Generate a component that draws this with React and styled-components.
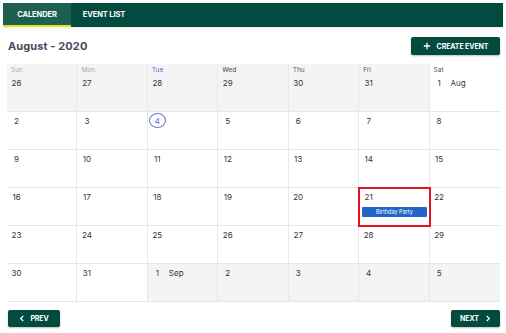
import React from "react";
import styled, { createGlobalStyle } from "styled-components";

const Global = createGlobalStyle`
  html, body { margin: 0; padding: 0; background: #fff; }
  body { font-family: Inter, "Noto Sans", sans-serif; }
  * { box-sizing: border-box; }
`;

const Page = styled.div`
  width: 506px;
  height: 333px;
  padding: 3px 3px 0 3px;
  background: #fff;
`;

const TopBar = styled.div`
  display: flex;
  height: 24px;
  background: #024b3e;
  box-shadow: 0 1px 2px rgba(0, 0, 0, 0.08);
`;

const Tab = styled.div`
  display: flex;
  align-items: center;
  justify-content: center;
  width: ${(p) => p.$w}px;
  height: 100%;
  padding-top: 1px;
  background: ${(p) => (p.$active ? "#1d5f50" : "transparent")};
  border-bottom: 2px solid ${(p) => (p.$active ? "#e4e21a" : "transparent")};
  color: #fff;
  font-size: 7.5px;
  font-weight: 700;
  letter-spacing: -0.1px;
`;

const Body = styled.div`
  padding: 0 3px 0 4px;
`;

const Header = styled.div`
  display: flex;
  align-items: center;
  justify-content: space-between;
  margin-top: 10px;
  height: 18px;
  padding-left: 1px;
`;

const Title = styled.div`
  font-size: 11px;
  font-weight: 700;
  color: #474b5f;
  letter-spacing: 0.1px;
`;

const Button = styled.button`
  display: flex;
  align-items: center;
  justify-content: center;
  gap: ${(p) => p.$gap || 5}px;
  width: ${(p) => p.$w}px;
  height: ${(p) => p.$h || 17}px;
  padding: 0;
  border: none;
  border-radius: 2px;
  background: #024b3e;
  color: #fff;
  font-family: Inter, "Noto Sans", sans-serif;
  font-size: 7px;
  font-weight: 700;
  letter-spacing: -0.1px;
  box-shadow: 0 1px 2px rgba(0, 0, 0, 0.25);
  cursor: pointer;
`;

const Grid = styled.div`
  display: grid;
  grid-template-columns: repeat(7, 1fr);
  grid-template-rows: 48px repeat(5, 38px);
  margin-top: 9px;
`;

const Cell = styled.div`
  position: relative;
  display: flex;
  flex-direction: column;
  padding: 1px 0 0 1px;
  background: ${(p) => (p.$muted ? "#f4f4f4" : "#fff")};
  border-right: ${(p) => (p.$last ? "none" : "1px solid #e7e7e7")};
  border-bottom: 1px solid #e7e7e7;
  outline: ${(p) => (p.$selected ? "2px solid #e3121c" : "none")};
  outline-offset: -1px;
  z-index: ${(p) => (p.$selected ? 1 : 0)};
`;

const DayName = styled.div`
  height: 10px;
  padding: 1px 0 0 3px;
  font-size: 6.5px;
  line-height: 8px;
  color: ${(p) => p.$color};
`;

const DateRow = styled.div`
  display: flex;
  align-items: center;
  gap: 3px;
`;

const DateNum = styled.div`
  display: flex;
  align-items: center;
  justify-content: center;
  width: 17px;
  height: 15px;
  border-radius: 50%;
  border: 1px solid ${(p) => (p.$today ? "#6d74d8" : "transparent")};
  font-size: 8px;
  color: ${(p) => (p.$today ? "#5a62d0" : "#333")};
`;

const MonthLabel = styled.span`
  font-size: 8px;
  color: #333;
`;

const Event = styled.div`
  margin: 3px 2px 0 2px;
  height: 10px;
  background: #1e65c7;
  color: #fff;
  font-size: 5.5px;
  line-height: 10px;
  text-align: center;
  border-radius: 1px;
`;

const Footer = styled.div`
  display: flex;
  justify-content: space-between;
  margin-top: 8px;
  padding-left: 1px;
`;

const Plus = () => (
  <svg width="8" height="8" viewBox="0 0 10 10">
    <path d="M5 1v8M1 5h8" stroke="#fff" strokeWidth="1.6" />
  </svg>
);

const Chevron = ({ dir }) => (
  <svg width="6" height="7" viewBox="0 0 6 8">
    <path
      d={dir === "left" ? "M4.5 1L1.5 4l3 3" : "M1.5 1l3 3-3 3"}
      stroke="#fff"
      strokeWidth="1.5"
      fill="none"
    />
  </svg>
);

const dayNames = [
  { n: "Sun", c: "#a9a9a9" },
  { n: "Mon", c: "#a9a9a9" },
  { n: "Tue", c: "#5b63d3" },
  { n: "Wed", c: "#444" },
  { n: "Thu", c: "#555" },
  { n: "Fri", c: "#555" },
  { n: "Sat", c: "#555" },
];

const buildDays = () => {
  const days = [];
  [26, 27, 28, 29, 30, 31].forEach((d) => days.push({ d, muted: true }));
  for (let d = 1; d <= 31; d++) days.push({ d, month: d === 1 ? "Aug" : null });
  for (let d = 1; d <= 5; d++) days.push({ d, muted: true, month: d === 1 ? "Sep" : null });
  return days;
};

export default function App() {
  const days = buildDays();
  return (
    <>
      <Global />
      <Page>
        <TopBar>
          <Tab $active $w={68}>CALENDER</Tab>
          <Tab $w={66}>EVENT LIST</Tab>
        </TopBar>
        <Body>
          <Header>
            <Title>August - 2020</Title>
            <Button $w={89} $h={18} $gap={6}>
              <Plus />
              CREATE EVENT
            </Button>
          </Header>
          <Grid>
            {days.map((day, i) => {
              const col = i % 7;
              const isToday = !day.muted && day.d === 4;
              const selected = !day.muted && day.d === 21;
              return (
                <Cell key={i} $muted={day.muted} $last={col === 6} $selected={selected}>
                  {i < 7 && <DayName $color={dayNames[col].c}>{dayNames[col].n}</DayName>}
                  <DateRow>
                    <DateNum $today={isToday}>{day.d}</DateNum>
                    {day.month && <MonthLabel>{day.month}</MonthLabel>}
                  </DateRow>
                  {selected && <Event>Birthday Party</Event>}
                </Cell>
              );
            })}
          </Grid>
          <Footer>
            <Button $w={52} $gap={5}>
              <Chevron dir="left" />
              PREV
            </Button>
            <Button $w={49} $gap={6}>
              NEXT
              <Chevron dir="right" />
            </Button>
          </Footer>
        </Body>
      </Page>
    </>
  );
}
